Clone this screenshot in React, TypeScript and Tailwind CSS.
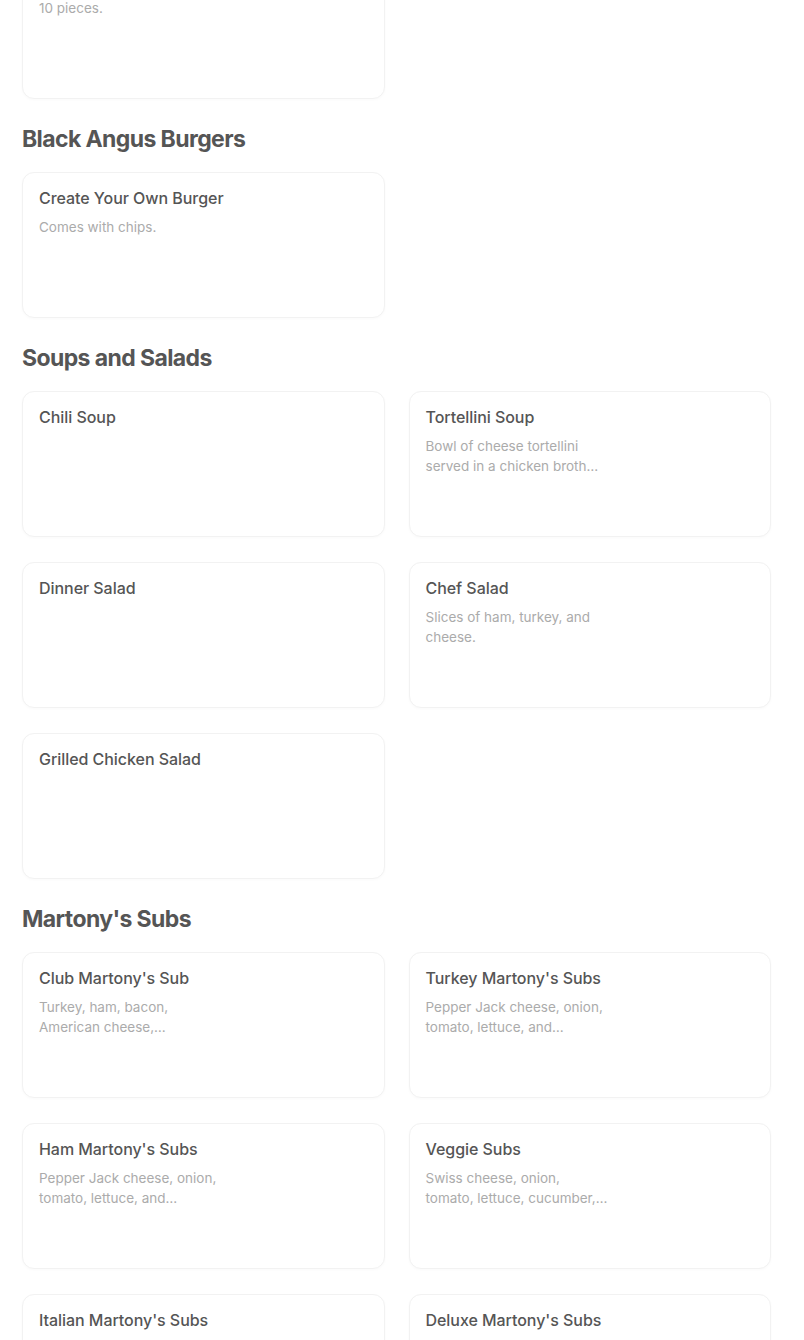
import React from "react";

type Item = { title: string; desc?: string[] };
type Section = { name?: string; items: Item[] };

const sections: Section[] = [
  { items: [{ title: "Chicken Tenders", desc: ["10 pieces."] }] },
  { name: "Black Angus Burgers", items: [{ title: "Create Your Own Burger", desc: ["Comes with chips."] }] },
  {
    name: "Soups and Salads",
    items: [
      { title: "Chili Soup" },
      { title: "Tortellini Soup", desc: ["Bowl of cheese tortellini", "served in a chicken broth…"] },
      { title: "Dinner Salad" },
      { title: "Chef Salad", desc: ["Slices of ham, turkey, and", "cheese."] },
      { title: "Grilled Chicken Salad" },
    ],
  },
  {
    name: "Martony's Subs",
    items: [
      { title: "Club Martony's Sub", desc: ["Turkey, ham, bacon,", "American cheese,…"] },
      { title: "Turkey Martony's Subs", desc: ["Pepper Jack cheese, onion,", "tomato, lettuce, and…"] },
      { title: "Ham Martony's Subs", desc: ["Pepper Jack cheese, onion,", "tomato, lettuce, and…"] },
      { title: "Veggie Subs", desc: ["Swiss cheese, onion,", "tomato, lettuce, cucumber,…"] },
      { title: "Italian Martony's Subs" },
      { title: "Deluxe Martony's Subs" },
    ],
  },
];

function Card({ item }: { item: Item }) {
  return (
    <div className="h-[146px] rounded-[12px] border border-[#f2f2f2] bg-white px-4 pt-[14px] shadow-[0_1px_3px_rgba(0,0,0,0.025)]">
      <div className="text-[16px] font-medium leading-[22px] tracking-[-0.05px] text-[#555555]">{item.title}</div>
      {item.desc && (
        <div className="mt-[8px] text-[13.5px] leading-[20px] text-[#ababab]">
          {item.desc.map((l, k) => (
            <div key={k} className="whitespace-nowrap">
              {l}
            </div>
          ))}
        </div>
      )}
    </div>
  );
}

export default function App() {
  return (
    <div
      className="h-[1340px] overflow-hidden bg-white"
      style={{ fontFamily: "Inter, 'Noto Sans', sans-serif" }}
    >
      <div className="mt-[-47px] w-[804px] pl-[22px] pr-[33px]">
        {sections.map((s, i) => (
          <div key={i} className={i === 0 ? "" : "mt-6"}>
            {s.name && (
              <h2 className="mb-[17px] text-[23px] font-bold leading-8 tracking-[-0.6px] text-[#555555]">
                {s.name}
              </h2>
            )}
            <div className="grid grid-cols-2 gap-x-[24px] gap-y-[25px]">
              {s.items.map((it, j) => (
                <Card key={j} item={it} />
              ))}
            </div>
          </div>
        ))}
      </div>
    </div>
  );
}
